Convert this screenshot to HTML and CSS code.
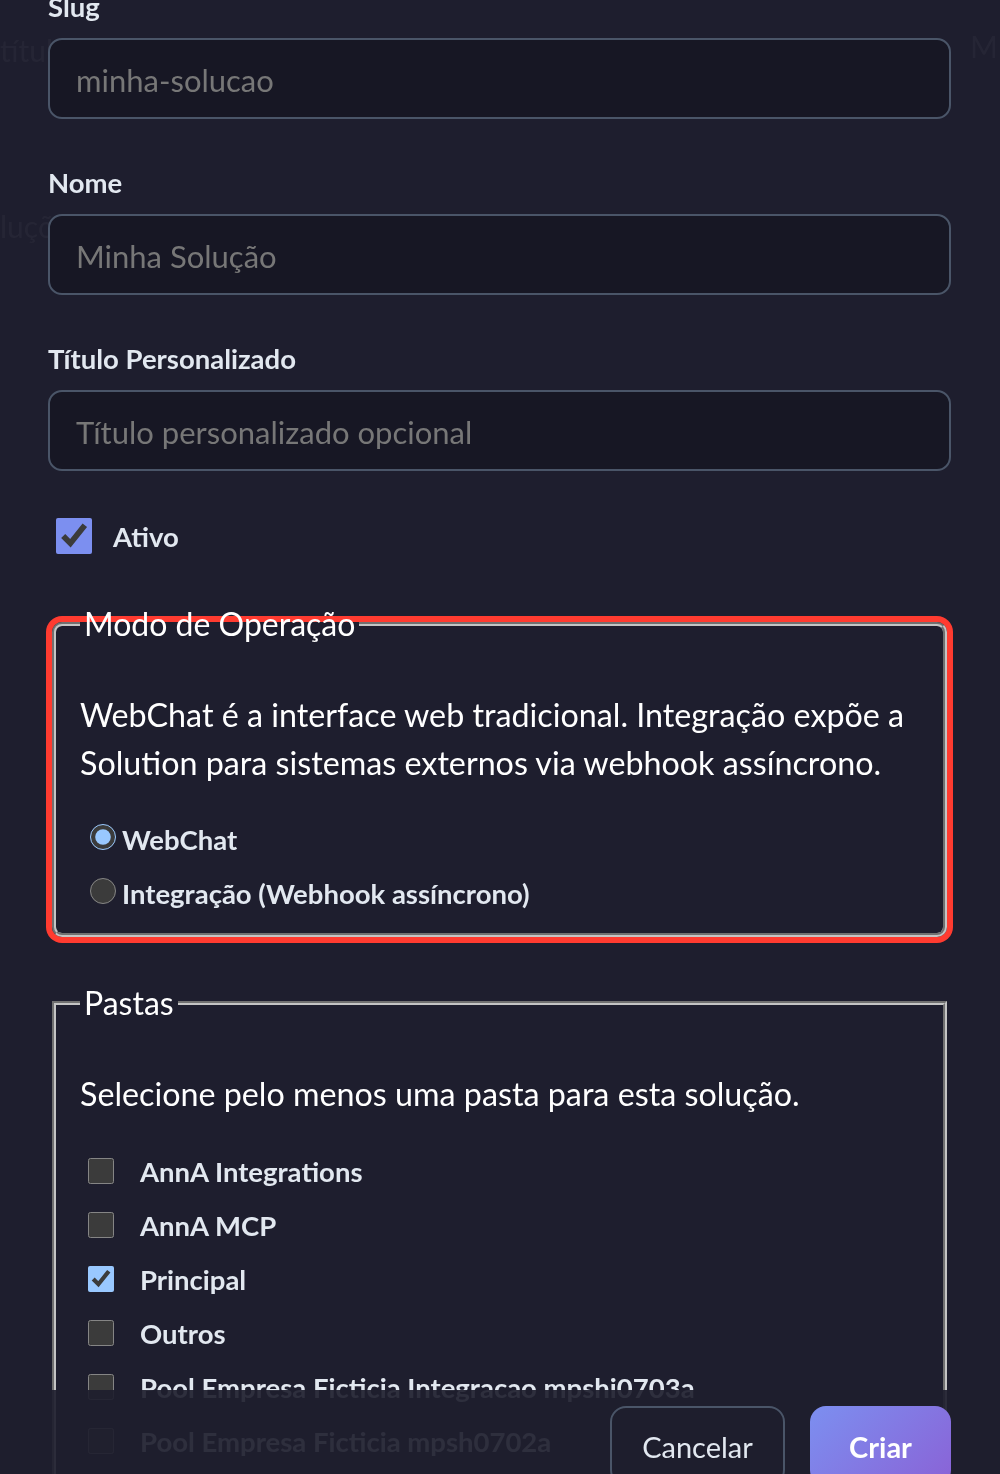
FILE: index.html
```html
<!DOCTYPE html>
<html lang="pt-BR">
<head>
<meta charset="utf-8">
<title>Nova Solução</title>
<link rel="stylesheet" href="styles.css">
</head>
<body>
<div class="backdrop" aria-hidden="true">
  <span class="ghost ghost-a">título personalizado</span>
  <span class="ghost ghost-b">M</span>
  <span class="ghost ghost-c">luções</span>
</div>
<form class="modal">
  <div class="field">
    <label class="lbl" for="slug">Slug</label>
    <input class="inp" id="slug" type="text" placeholder="minha-solucao">
  </div>
  <div class="field">
    <label class="lbl" for="nome">Nome</label>
    <input class="inp" id="nome" type="text" placeholder="Minha Solução">
  </div>
  <div class="field">
    <label class="lbl" for="titulo">Título Personalizado</label>
    <input class="inp" id="titulo" type="text" placeholder="Título personalizado opcional">
  </div>
  <label class="active-row"><input class="cb-lg" type="checkbox" checked><span>Ativo</span></label>

  <fieldset class="set set-mode">
    <legend>Modo de Operação</legend>
    <p class="desc">WebChat é a interface web tradicional. Integração expõe a Solution para sistemas externos via webhook assíncrono.</p>
    <label class="radio-row"><input type="radio" name="modo" checked>WebChat</label>
    <label class="radio-row"><input type="radio" name="modo">Integração (Webhook assíncrono)</label>
  </fieldset>

  <fieldset class="set set-folders">
    <legend>Pastas</legend>
    <p class="desc">Selecione pelo menos uma pasta para esta solução.</p>
    <label class="folder-row"><input type="checkbox"><span>AnnA Integrations</span></label>
    <label class="folder-row"><input type="checkbox"><span>AnnA MCP</span></label>
    <label class="folder-row"><input type="checkbox" checked><span>Principal</span></label>
    <label class="folder-row"><input type="checkbox"><span>Outros</span></label>
    <label class="folder-row"><input type="checkbox"><span>Pool Empresa Ficticia Integracao mpshi0703a</span></label>
    <label class="folder-row"><input type="checkbox"><span>Pool Empresa Ficticia mpsh0702a</span></label>
  </fieldset>
</form>
<div class="footer">
  <button class="btn btn-cancel" type="button">Cancelar</button>
  <button class="btn btn-primary" type="button">Criar</button>
</div>
</body>
</html>
```
FILE: styles.css
```css
html, body {
  margin: 0;
  padding: 0;
}
body {
  background: #1e1e2e;
  color: #ffffff;
  font-family: "Lato", "Noto Sans", sans-serif;
  color-scheme: dark;
  overflow: hidden;
  height: 1474px;
}
.backdrop {
  position: fixed;
  inset: 0;
  pointer-events: none;
}
.ghost {
  position: absolute;
  color: rgba(255, 255, 255, 0.035);
  font-size: 30px;
}
.ghost-a { left: 0; top: 32px; }
.ghost-b { left: 970px; top: 28px; }
.ghost-c { left: 0; top: 208px; }

.modal {
  position: relative;
  margin: -9px 49px 0 48px;
}
.field {
  display: flex;
  flex-direction: column;
  margin-bottom: 48px;
}
.lbl {
  font-size: 27.5px;
  font-weight: 700;
  line-height: 32px;
  color: #e2e8f0;
  margin-bottom: 15px;
}
.inp {
  box-sizing: border-box;
  height: 81px;
  width: 100%;
  margin: 0;
  padding: 3px 26px 0;
  border: 2px solid #4a5568;
  border-radius: 14px;
  background: #171724;
  color: #e2e8f0;
  font-family: inherit;
  font-size: 31px;
  outline: none;
}
.inp::placeholder {
  color: #777777;
}
.active-row {
  display: flex;
  align-items: center;
  height: 36px;
  margin-top: -1px;
  font-size: 27.5px;
  font-weight: 700;
  color: #e2e8f0;
}
.cb-lg {
  width: 36px;
  height: 36px;
  margin: 0 21px 0 8px;
  accent-color: #7c8ff0;
}
.set {
  margin: 0 4px;
  padding: 0 24px 12px;
  border: 4px groove #c4c4c4;
  min-width: 0;
}
.set legend {
  padding: 0 4px;
  font-size: 32px;
  line-height: 4px;
  color: #ffffff;
}
.set-mode {
  margin-top: 68px;
  border-radius: 10px;
  box-shadow: 0 0 0 6px #ff3b30;
}
.set-folders {
  margin-top: 64px;
  padding-bottom: 40px;
}
.desc {
  margin: 65px 0 26px;
  font-size: 32.25px;
  line-height: 48px;
  color: #ffffff;
}
.radio-row {
  display: block;
  line-height: 54px;
  font-size: 27.5px;
  font-weight: 700;
  color: #e2e8f0;
}
.radio-row input {
  width: 26px;
  height: 26px;
  margin: 6px 6px 0 10px;
}
.folder-row {
  display: flex;
  align-items: center;
  height: 54px;
  font-size: 27.5px;
  font-weight: 700;
  color: #e2e8f0;
}
.folder-row input {
  width: 26px;
  height: 26px;
  margin: 0 26px 0 8px;
}
.footer {
  position: fixed;
  left: 0;
  right: 0;
  top: 1390px;
  height: 120px;
  box-sizing: border-box;
  padding: 16px 49px 0 0;
  display: flex;
  justify-content: flex-end;
  align-items: flex-start;
  gap: 25px;
  background: rgba(30, 30, 46, 0.92);
}
.btn {
  height: 80px;
  border-radius: 16px;
  font-family: inherit;
  font-size: 29px;
  cursor: pointer;
}
.btn-cancel {
  width: 175px;
  background: transparent;
  border: 2px solid #4a5568;
  color: #e2e8f0;
}
.btn-primary {
  width: 141px;
  border: none;
  background: linear-gradient(135deg, #7c8ff0 0%, #8a62d6 100%);
  color: #ffffff;
  font-weight: 700;
}
```
